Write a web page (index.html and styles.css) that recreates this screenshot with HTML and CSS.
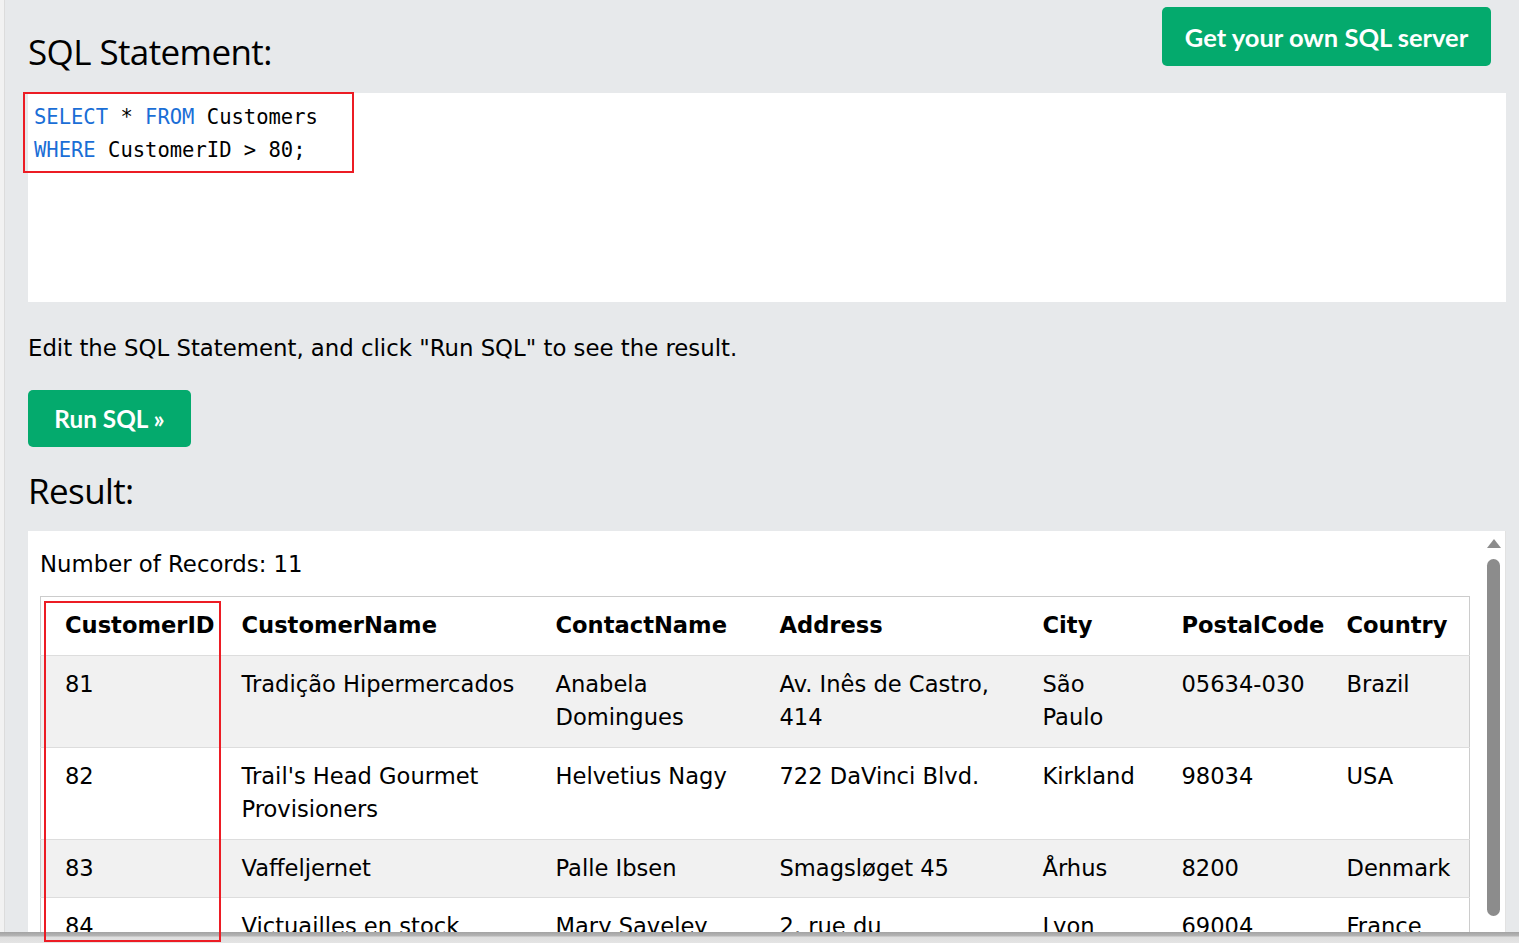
FILE: index.html
```html
<!DOCTYPE html>
<html lang="en">
<head>
<meta charset="utf-8">
<title>SQL Tryit Editor</title>
<link rel="stylesheet" href="styles.css">
</head>
<body>
<div class="page">
  <div class="top">
    <h3 class="heading">SQL Statement:</h3>
    <a class="btn btn-server" href="#">Get your own SQL server</a>
  </div>
  <div class="code">
    <div class="code-line"><span class="kw">SELECT</span> * <span class="kw">FROM</span> Customers</div>
    <div class="code-line"><span class="kw">WHERE</span> CustomerID &gt; 80;</div>
    <div class="mark mark-code"></div>
  </div>
  <p class="hint">Edit the SQL Statement, and click "Run SQL" to see the result.</p>
  <a class="btn btn-run" href="#">Run SQL »</a>
  <h3 class="heading heading-result">Result:</h3>
  <div class="result">
    <p class="count">Number of Records: 11</p>
    <table class="grid">
      <colgroup>
        <col class="c1"><col class="c2"><col class="c3"><col class="c4"><col class="c5"><col class="c6"><col class="c7">
      </colgroup>
      <tr><th>CustomerID</th><th>CustomerName</th><th>ContactName</th><th>Address</th><th>City</th><th>PostalCode</th><th>Country</th></tr>
      <tr><td>81</td><td>Tradição Hipermercados</td><td>Anabela Domingues</td><td>Av. Inês de Castro, 414</td><td>São Paulo</td><td>05634-030</td><td>Brazil</td></tr>
      <tr><td>82</td><td>Trail's Head Gourmet Provisioners</td><td>Helvetius Nagy</td><td>722 DaVinci Blvd.</td><td>Kirkland</td><td>98034</td><td>USA</td></tr>
      <tr><td>83</td><td>Vaffeljernet</td><td>Palle Ibsen</td><td>Smagsløget 45</td><td>Århus</td><td>8200</td><td>Denmark</td></tr>
      <tr><td>84</td><td>Victuailles en stock</td><td>Mary Saveley</td><td>2, rue du Commerce</td><td>Lyon</td><td>69004</td><td>France</td></tr>
      <tr><td>85</td><td>Vins et alcools Chevalier</td><td>Paul Henriot</td><td>59 rue de l'Abbaye</td><td>Reims</td><td>51100</td><td>France</td></tr>
    </table>
    <div class="mark mark-col"></div>
    <div class="vscroll">
      <div class="vscroll-arrow"></div>
      <div class="vscroll-thumb"></div>
    </div>
  </div>
</div>
<div class="hbar"></div>
</body>
</html>
```
FILE: styles.css
```css
html, body {
  margin: 0;
  padding: 0;
  height: 100%;
  overflow: hidden;
}
body {
  background: #e7e9eb;
  color: #000;
  font-family: "DejaVu Sans", Verdana, sans-serif;
}
.page {
  position: relative;
  box-sizing: border-box;
  height: 100%;
  padding: 0 13px 0 24px;
  border-left: 4px solid #f2f2f2;
  box-shadow: inset 1px 0 0 #dcdcdc;
}
.top {
  display: flex;
  justify-content: space-between;
  align-items: flex-start;
  height: 93px;
  padding-right: 15px;
}
.heading {
  margin: 0;
  font-family: "Open Sans", "Noto Sans", sans-serif;
  font-weight: 400;
  font-size: 35px;
  line-height: 48px;
  letter-spacing: -0.6px;
}
.top .heading {
  margin-top: 28px;
}
.btn {
  display: inline-flex;
  align-items: center;
  justify-content: center;
  background: #04aa6d;
  color: #fff;
  text-decoration: none;
  font-family: Lato, "Open Sans", sans-serif;
  font-weight: 700;
  border-radius: 5px;
}
.btn-server {
  margin-top: 7px;
  width: 329px;
  height: 59px;
  font-size: 25.5px;
}
.code {
  position: relative;
  background: #fff;
  height: 209px;
  box-sizing: border-box;
  padding: 8px 6px 6px;
  font-family: "DejaVu Sans Mono", "Liberation Mono", monospace;
  font-size: 20.5px;
  line-height: 33px;
}
.kw {
  color: #1a6ed6;
}
.mark {
  position: absolute;
  border: 2px solid #ec1c24;
  box-sizing: border-box;
  pointer-events: none;
  z-index: 5;
}
.mark-code {
  left: -5px;
  top: -1px;
  width: 331px;
  height: 81px;
}
.hint {
  margin: 33px 0 0;
  font-size: 22.8px;
  line-height: 26px;
}
.btn-run {
  margin-top: 29px;
  width: 163px;
  height: 57px;
  font-size: 24.3px;
}
.heading-result {
  margin-top: 20px;
}
.result {
  position: relative;
  background: #fff;
  margin-top: 16px;
  padding: 17px 36px 0 12px;
  height: 600px;
  box-sizing: border-box;
}
.count {
  margin: 0 0 16px;
  font-size: 22.8px;
  line-height: 32px;
}
.grid {
  border-collapse: collapse;
  table-layout: fixed;
  width: 1430px;
  border: 1px solid #ccc;
  font-size: 22.6px;
  line-height: 33.5px;
}
.c1 { width: 189px; }
.c2 { width: 314px; }
.c3 { width: 224px; }
.c4 { width: 263px; }
.c5 { width: 139px; }
.c6 { width: 165px; }
.c7 { width: 135px; }
.grid th, .grid td {
  text-align: left;
  vertical-align: top;
  padding: 12px 12px;
  border-bottom: 1px solid #ddd;
}
.grid th {
  font-weight: 700;
}
.grid th:first-child, .grid td:first-child {
  padding-left: 24px;
}
.grid td:nth-child(2), .grid td:nth-child(3), .grid td:nth-child(4), .grid td:nth-child(5) {
  padding-right: 24px;
}
.grid tr:nth-child(even) {
  background: #f1f1f1;
}
.mark-col {
  left: 16px;
  top: 70px;
  width: 177px;
  height: 341px;
  z-index: 20;
}
.vscroll {
  position: absolute;
  top: 0;
  right: 0;
  width: 22px;
  height: 100%;
  background: #fff;
  border-right: 1px solid #e2e2e2;
}
.vscroll-arrow {
  position: absolute;
  left: 4px;
  top: 8px;
  width: 0;
  height: 0;
  border-left: 7px solid transparent;
  border-right: 7px solid transparent;
  border-bottom: 9px solid #8c8c8c;
}
.vscroll-thumb {
  position: absolute;
  left: 4px;
  top: 28px;
  width: 13px;
  height: 357px;
  border-radius: 7px;
  background: #8c8c8c;
}
.hbar {
  position: fixed;
  left: 0;
  right: 0;
  bottom: 0;
  height: 11px;
  background: linear-gradient(#a3a3a3 0, #b5b5b5 4px, #dedede 5px, #e4e4e4 100%);
  z-index: 10;
}
```
